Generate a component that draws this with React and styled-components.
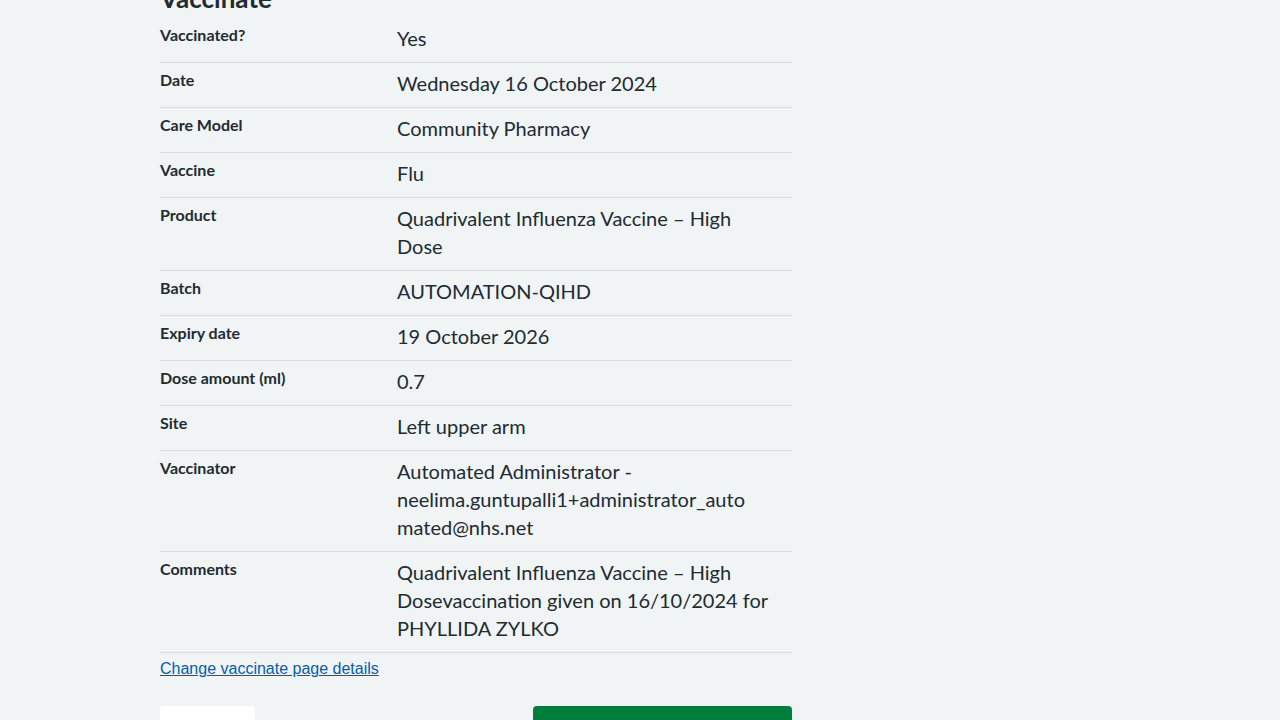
import React from 'react';
import styled, { createGlobalStyle } from 'styled-components';

const GlobalStyle = createGlobalStyle`
  body {
    margin: 0;
    background: #f0f4f5;
    color: #212b32;
    font-family: Lato, "Noto Sans", sans-serif;
  }
`

const Page = styled.main`
  width: 632px;
  margin: -18px 0 0 160px;
`

const Heading = styled.h2`
  font-size: 26px;
  line-height: 32px;
  font-weight: 700;
  margin: 0 0 4px;
`

const List = styled.dl`
  margin: 0;
`

const Row = styled.div`
  display: grid;
  grid-template-columns: 237px 1fr;
  border-bottom: 1px solid #d8dde0;
`

const Key = styled.dt`
  font-size: 16px;
  line-height: 18px;
  font-weight: 700;
  padding: 8px 24px 8px 0;
`

const Value = styled.dd`
  margin: 0;
  font-size: 20px;
  line-height: 28px;
  white-space: nowrap;
  padding: 6px 24px 10px 0;
`

const ChangeLink = styled.a`
  display: block;
  width: fit-content;
  margin-top: 7px;
  font-family: "Liberation Sans", Arial, sans-serif;
  font-size: 16px;
  color: #005eb8;
  text-decoration: underline;
`

const Actions = styled.div`
  display: flex;
  justify-content: space-between;
  margin-top: 28px;
`

const Button = styled.button`
  height: 48px;
  width: ${p => p.$wide ? '259px' : '95px'};
  border: 0;
  border-radius: 4px;
  background: ${p => p.$primary ? '#007f3b' : '#ffffff'};
  color: ${p => p.$primary ? '#ffffff' : '#005eb8'};
  font-family: Lato, sans-serif;
  font-size: 19px;
  font-weight: 700;
`

const rows = [
  ['Vaccinated?', ['Yes']],
  ['Date', ['Wednesday 16 October 2024']],
  ['Care Model', ['Community Pharmacy']],
  ['Vaccine', ['Flu']],
  ['Product', ['Quadrivalent Influenza Vaccine – High', 'Dose']],
  ['Batch', ['AUTOMATION-QIHD']],
  ['Expiry date', ['19 October 2026']],
  ['Dose amount (ml)', ['0.7']],
  ['Site', ['Left upper arm']],
  ['Vaccinator', ['Automated Administrator -', 'neelima.guntupalli1+administrator_auto', 'mated@nhs.net']],
  ['Comments', ['Quadrivalent Influenza Vaccine – High', 'Dosevaccination given on 16/10/2024 for', 'PHYLLIDA ZYLKO']],
]

const App = () => {
  return (
    <>
      <GlobalStyle />
      <Page>
        <Heading>Vaccinate</Heading>
        <List>
          {rows.map(([key, lines]) => (
            <Row key={key}>
              <Key>{key}</Key>
              <Value>
                {lines.map((line, i) => (
                  <React.Fragment key={i}>
                    {i > 0 && <br />}
                    {line}
                  </React.Fragment>
                ))}
              </Value>
            </Row>
          ))}
        </List>
        <ChangeLink href="#">Change vaccinate page details</ChangeLink>
        <Actions>
          <Button>Back</Button>
          <Button $primary $wide>Confirm and save</Button>
        </Actions>
      </Page>
    </>
  )
}

export default App;
